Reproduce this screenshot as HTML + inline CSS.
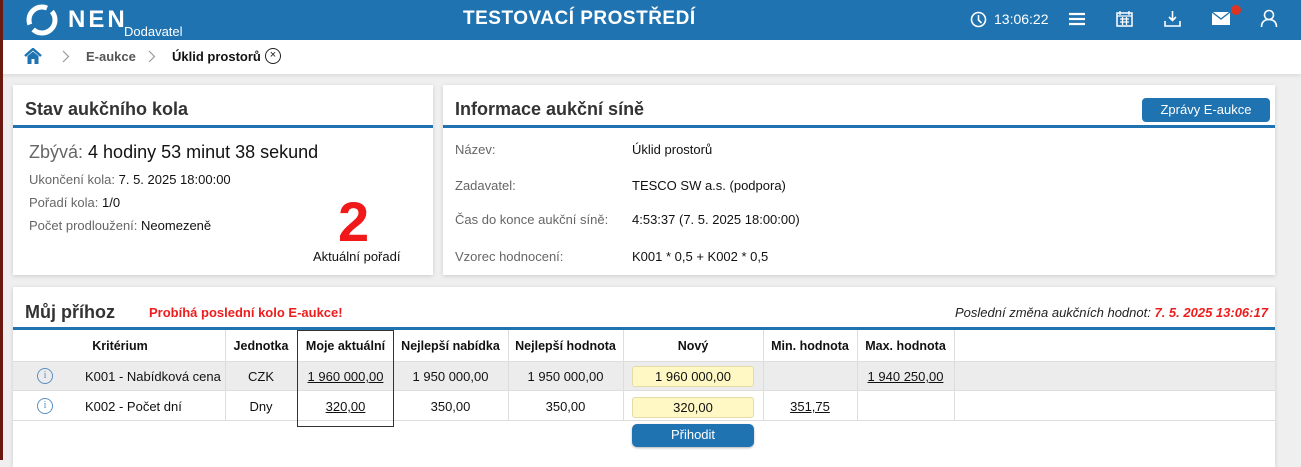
<!DOCTYPE html>
<html><head><meta charset="utf-8"><style>
*{box-sizing:border-box;margin:0;padding:0}
body{width:1301px;height:460px;overflow:hidden;background:#efefef;font-family:"Liberation Sans",sans-serif;position:relative;color:#111}
.a{position:absolute;white-space:nowrap}
.hdr{left:0;top:0;width:1301px;height:40px;background:#1f73b1}
.bc{left:0;top:40px;width:1301px;height:34px;background:#fff;box-shadow:0 2px 3px rgba(0,0,0,.08)}
.card{background:#fff;box-shadow:0 1px 4px rgba(0,0,0,.15)}
.h2{font-size:18px;font-weight:bold;color:#333}
.bl{height:3px;background:#1f73b1}
.lbl{font-size:13px;color:#666}
.val{font-size:13px;color:#111}
.th{font-size:12.5px;font-weight:bold;text-align:center;color:#111}
.td{font-size:13px;text-align:center}
.u{text-decoration:underline}
.vl{position:absolute;width:1px;background:#ddd}
.inp{background:#fff8c4;border:1px solid #e3dca8;border-radius:3px;font-size:13px;text-align:center;line-height:19px}
</style></head><body>
<div class="a" style="left:0;top:0;width:3px;height:460px;background:#6b1a12;z-index:5"></div>
<div class="a hdr"></div>
<svg class="a" style="left:26px;top:4px" width="32" height="32" viewBox="0 0 32 32"><circle cx="16" cy="16" r="13" fill="none" stroke="#fff" stroke-width="5" stroke-dasharray="30 6"/></svg>
<div class="a" style="left:68px;top:6px;font-size:24px;font-weight:bold;color:#fff;letter-spacing:3px">NEN</div>
<div class="a" style="left:124px;top:24px;font-size:13px;color:#fff">Dodavatel</div>
<div class="a" style="left:463px;top:8px;font-size:19px;font-weight:bold;color:#fff;letter-spacing:.5px">TESTOVACÍ PROSTŘEDÍ</div>
<svg class="a" style="left:970px;top:11px" width="17" height="17" viewBox="0 0 17 17"><circle cx="8.5" cy="8.5" r="7" fill="none" stroke="#fff" stroke-width="1.6"/><path d="M8.5 4v5l3 3" stroke="#fff" stroke-width="1.6" fill="none"/></svg>
<div class="a" style="left:994px;top:11px;font-size:14px;color:#fff">13:06:22</div>
<svg class="a" style="left:1069px;top:12px" width="16" height="14"><path d="M0 2h16M0 7h16M0 12h16" stroke="#fff" stroke-width="2.2"/></svg>
<svg class="a" style="left:1116px;top:10px" width="17" height="17" viewBox="0 0 17 17"><rect x="1" y="3" width="15" height="13" fill="none" stroke="#fff" stroke-width="1.5"/><path d="M4 1v4M13 1v4M1 6h15M4 9h9M4 12h9M6.5 7v8M10.5 7v8" stroke="#fff" stroke-width="1.3"/></svg>
<svg class="a" style="left:1164px;top:10px" width="17" height="18" viewBox="0 0 17 18"><path d="M8.5 1v9M5 7l3.5 3.5L12 7M1 11v5h15v-5" stroke="#fff" stroke-width="1.6" fill="none"/></svg>
<svg class="a" style="left:1212px;top:12px" width="18" height="13"><rect x="0" y="0" width="18" height="13" fill="#fff"/><path d="M0 0l9 7 9-7" stroke="#1f73b1" stroke-width="1.3" fill="none"/></svg>
<div class="a" style="left:1231px;top:5px;width:10px;height:10px;border-radius:50%;background:#d32"></div>
<svg class="a" style="left:1260px;top:9px" width="18" height="19" viewBox="0 0 18 19"><circle cx="9" cy="6" r="4.5" fill="none" stroke="#fff" stroke-width="1.6"/><path d="M1.5 18c0-5 3-7.5 7.5-7.5s7.5 2.5 7.5 7.5" fill="none" stroke="#fff" stroke-width="1.6"/></svg>
<div class="a bc"></div>
<svg class="a" style="left:24px;top:48px" width="18" height="17" viewBox="0 0 18 17"><path d="M1 8L9 1l8 7" stroke="#1f73b1" stroke-width="2.4" fill="none"/><path d="M3.5 8v8h4v-5h3v5h4V8L9 3.5z" fill="#1f73b1"/></svg>
<svg class="a" style="left:62px;top:50px" width="8" height="13"><path d="M1 1l5.5 5.5L1 12" stroke="#999" stroke-width="1.2" fill="none"/></svg>
<div class="a" style="left:86px;top:49px;font-size:13px;color:#555;font-weight:bold">E-aukce</div>
<svg class="a" style="left:148px;top:50px" width="8" height="13"><path d="M1 1l5.5 5.5L1 12" stroke="#999" stroke-width="1.2" fill="none"/></svg>
<div class="a" style="left:172px;top:49px;font-size:13px;font-weight:bold;color:#111">Úklid prostorů</div>
<div class="a" style="left:265px;top:48px;width:16px;height:16px;border:1.3px solid #222;border-radius:50%;font-size:11px;text-align:center;line-height:13px">×</div>

<div class="a card" style="left:13px;top:85px;width:420px;height:190px"></div>
<div class="a h2" style="left:25px;top:99px">Stav aukčního kola</div>
<div class="a bl" style="left:13px;top:125px;width:420px"></div>
<div class="a" style="left:29px;top:142px;font-size:18px;color:#111"><span style="color:#666">Zbývá:</span> 4 hodiny 53 minut 38 sekund</div>
<div class="a lbl" style="left:29px;top:172px">Ukončení kola: <span class="val">7. 5. 2025 18:00:00</span></div>
<div class="a lbl" style="left:29px;top:195px">Pořadí kola: <span class="val">1/0</span></div>
<div class="a lbl" style="left:29px;top:218px">Počet prodloužení: <span class="val">Neomezeně</span></div>
<div class="a" style="left:338px;top:192px;font-size:56px;font-weight:bold;color:#f01818;line-height:60px">2</div>
<div class="a val" style="left:313px;top:249px">Aktuální pořadí</div>

<div class="a card" style="left:443px;top:85px;width:832px;height:190px"></div>
<div class="a h2" style="left:455px;top:99px">Informace aukční síně</div>
<div class="a" style="left:1142px;top:98px;width:128px;height:24px;background:#1f73b1;border-radius:4px;color:#fff;font-size:13px;text-align:center;line-height:23px">Zprávy E-aukce</div>
<div class="a bl" style="left:443px;top:125px;width:832px"></div>
<div class="a lbl" style="left:455px;top:142px">Název:</div><div class="a val" style="left:632px;top:142px">Úklid prostorů</div>
<div class="a lbl" style="left:455px;top:178px">Zadavatel:</div><div class="a val" style="left:632px;top:178px">TESCO SW a.s. (podpora)</div>
<div class="a lbl" style="left:455px;top:212px">Čas do konce aukční síně:</div><div class="a val" style="left:632px;top:212px">4:53:37 (7. 5. 2025 18:00:00)</div>
<div class="a lbl" style="left:455px;top:249px">Vzorec hodnocení:</div><div class="a val" style="left:632px;top:249px">K001 * 0,5 + K002 * 0,5</div>

<div class="a card" style="left:13px;top:287px;width:1262px;height:180px"></div>
<div class="a h2" style="left:25px;top:302px">Můj příhoz</div>
<div class="a" style="left:149px;top:305px;font-size:13px;font-weight:bold;color:#ee1c1c">Probíhá poslední kolo E-aukce!</div>
<div class="a" style="left:955px;top:305px;font-size:13px;font-style:italic;color:#222">Poslední změna aukčních hodnot: <b style="color:#ee1c1c">7. 5. 2025 13:06:17</b></div>
<div class="a bl" style="left:13px;top:327px;width:1262px"></div>
<div class="a" style="left:13px;top:361px;width:1262px;height:30px;background:#ececec;border-top:1px solid #ddd;border-bottom:1px solid #ddd"></div>
<div class="a" style="left:13px;top:420px;width:1262px;height:1px;background:#ddd"></div>
<div class="vl" style="left:225px;top:330px;height:90px"></div>
<div class="vl" style="left:508px;top:330px;height:90px"></div>
<div class="vl" style="left:623px;top:330px;height:90px"></div>
<div class="vl" style="left:763px;top:330px;height:90px"></div>
<div class="vl" style="left:857px;top:330px;height:90px"></div>
<div class="vl" style="left:954px;top:330px;height:90px"></div>
<div class="a" style="left:297px;top:330px;width:97px;height:97px;border:1px solid #333"></div>
<div class="a th" style="left:60px;top:339px;width:120px">Kritérium</div>
<div class="a th" style="left:225px;top:339px;width:72px">Jednotka</div>
<div class="a th" style="left:297px;top:339px;width:97px">Moje aktuální</div>
<div class="a th" style="left:393px;top:339px;width:115px">Nejlepší nabídka</div>
<div class="a th" style="left:508px;top:339px;width:115px">Nejlepší hodnota</div>
<div class="a th" style="left:623px;top:339px;width:140px">Nový</div>
<div class="a th" style="left:763px;top:339px;width:94px">Min. hodnota</div>
<div class="a th" style="left:857px;top:339px;width:97px">Max. hodnota</div>
<div class="a" style="left:37px;top:368px;width:16px;height:16px;border:1px solid #5b8fc4;border-radius:50%;font-size:10px;color:#5b8fc4;text-align:center;line-height:14px;font-family:'Liberation Serif',serif">i</div>
<div class="a" style="left:37px;top:398px;width:16px;height:16px;border:1px solid #5b8fc4;border-radius:50%;font-size:10px;color:#5b8fc4;text-align:center;line-height:14px;font-family:'Liberation Serif',serif">i</div>
<div class="a td" style="left:85px;top:369px">K001 - Nabídková cena</div>
<div class="a td" style="left:85px;top:399px">K002 - Počet dní</div>
<div class="a td" style="left:225px;top:369px;width:72px">CZK</div>
<div class="a td" style="left:225px;top:399px;width:72px">Dny</div>
<div class="a td u" style="left:297px;top:369px;width:97px">1 960 000,00</div>
<div class="a td u" style="left:297px;top:399px;width:97px">320,00</div>
<div class="a td" style="left:393px;top:369px;width:115px">1 950 000,00</div>
<div class="a td" style="left:393px;top:399px;width:115px">350,00</div>
<div class="a td" style="left:508px;top:369px;width:115px">1 950 000,00</div>
<div class="a td" style="left:508px;top:399px;width:115px">350,00</div>
<div class="a inp" style="left:632px;top:366px;width:122px;height:21px">1 960 000,00</div>
<div class="a inp" style="left:632px;top:397px;width:122px;height:21px">320,00</div>
<div class="a td u" style="left:763px;top:399px;width:94px">351,75</div>
<div class="a td u" style="left:857px;top:369px;width:97px">1 940 250,00</div>
<div class="a" style="left:632px;top:424px;width:122px;height:23px;background:#1f73b1;border-radius:5px;color:#fff;font-size:13px;text-align:center;line-height:22px;box-shadow:0 1px 2px rgba(0,0,0,.3)">Přihodit</div>
</body></html>
